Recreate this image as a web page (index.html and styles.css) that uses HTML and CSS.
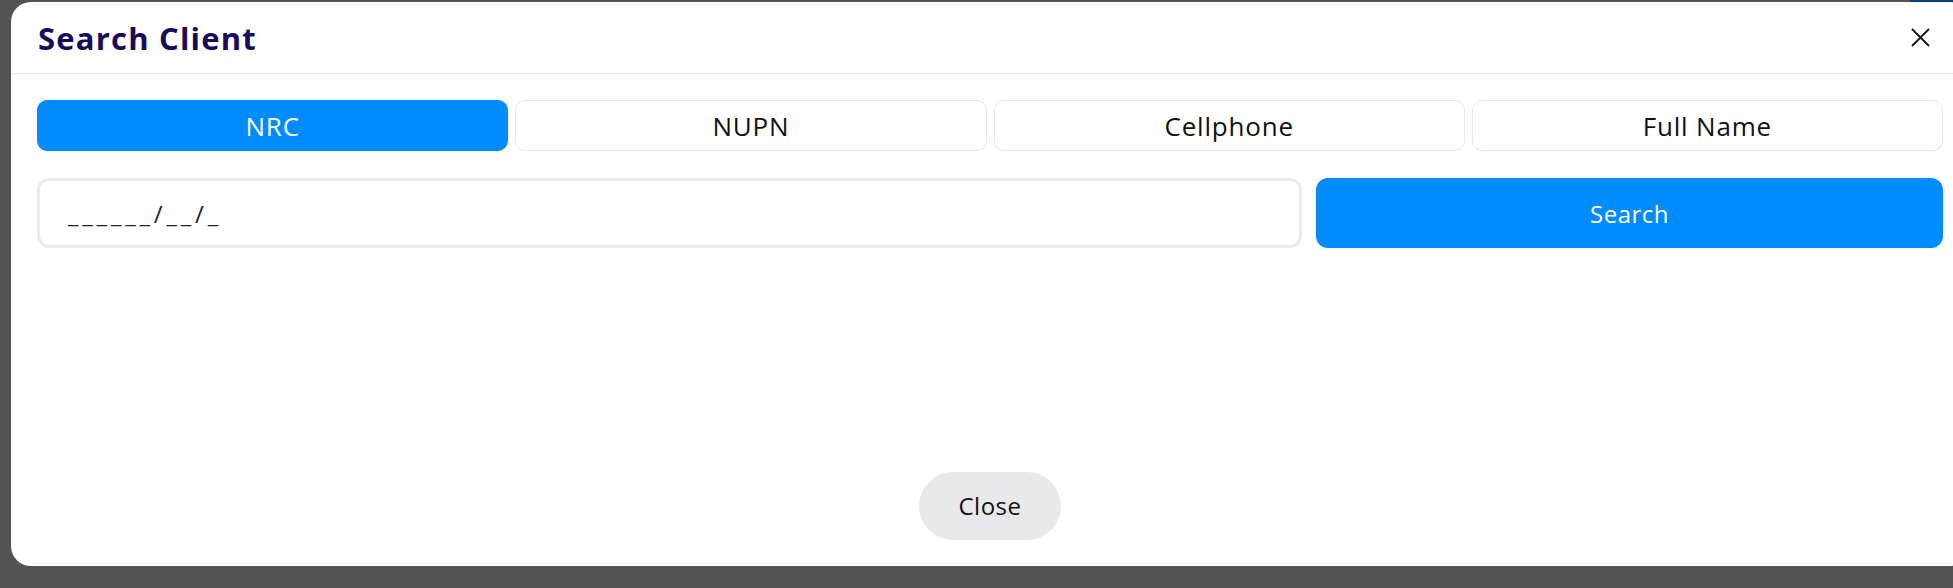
FILE: index.html
```html
<!DOCTYPE html>
<html>
<head>
<meta charset="utf-8">
<link rel="stylesheet" href="styles.css">
</head>
<body>
<div class="topstrip"><span class="topstrip-accent"></span></div>
<div class="modal">
  <div class="modal-header">
    <h2 class="modal-title">Search Client</h2>
    <button class="close-x" aria-label="Close">
      <svg width="19" height="19" viewBox="0 0 19 19"><path d="M1 1 L18 18 M18 1 L1 18" stroke="#111" stroke-width="1.8" fill="none"/></svg>
    </button>
  </div>
  <div class="modal-body">
    <div class="tabs">
      <button class="tab active">NRC</button>
      <button class="tab">NUPN</button>
      <button class="tab">Cellphone</button>
      <button class="tab">Full Name</button>
    </div>
    <div class="search-row">
      <input class="search-input" type="text" value="______/__/_">
      <button class="search-btn">Search</button>
    </div>
    <div class="modal-footer">
      <button class="close-btn">Close</button>
    </div>
  </div>
</div>
</body>
</html>
```

FILE: styles.css
```css
html, body {
  margin: 0;
  padding: 0;
}
body {
  background: #535353;
  overflow: hidden;
  font-family: "Open Sans", "Liberation Sans", sans-serif;
  width: 1953px;
  height: 588px;
  position: relative;
}
.topstrip {
  position: absolute;
  top: 0;
  left: 0;
  right: 0;
  height: 2px;
}
.topstrip-accent {
  position: absolute;
  right: 0;
  top: 0;
  width: 43px;
  height: 2px;
  background: #0d3f73;
}
.modal {
  margin: 2px 0 0 11px;
  width: 1959px;
  height: 564px;
  background: #fff;
  border-radius: 20px;
  display: flex;
  flex-direction: column;
  box-sizing: border-box;
}
.modal-header {
  height: 72px;
  box-sizing: border-box;
  border-bottom: 1px solid #e6e6e6;
  display: flex;
  align-items: center;
  justify-content: space-between;
  padding: 0 40px 0 27px;
}
.modal-title {
  margin: 0;
  font-size: 31px;
  font-weight: 700;
  color: #1a0a5c;
  letter-spacing: 1.2px;
}
.close-x {
  background: none;
  border: 0;
  padding: 0;
  width: 19px;
  height: 19px;
  display: flex;
  cursor: pointer;
}
.modal-body {
  flex: 1;
  display: flex;
  flex-direction: column;
  padding: 26px 27px 26px 26px;
}
.tabs {
  display: grid;
  grid-template-columns: repeat(4, 1fr);
  gap: 7px;
  width: 1906px;
}
.tab {
  height: 51px;
  border: 1px solid #e8e8e8;
  border-radius: 10px;
  background: #fff;
  color: #111;
  font-family: inherit;
  font-size: 26px;
  letter-spacing: 0.8px;
  padding: 0;
}
.tab.active {
  background: #008cff;
  border-color: #008cff;
  color: #fff;
}
.search-row {
  display: grid;
  grid-template-columns: minmax(0, 1265fr) minmax(0, 627fr);
  gap: 14px;
  width: 1906px;
  margin-top: 27px;
}
.search-input {
  height: 70px;
  box-sizing: border-box;
  border: 3px solid #ebebeb;
  border-radius: 12px;
  padding: 0 0 0 28px;
  font-family: inherit;
  font-size: 24px;
  color: #222;
  outline: none;
  letter-spacing: 3.8px;
}
.search-btn {
  height: 70px;
  border: 0;
  border-radius: 12px;
  background: #008cff;
  color: #fff;
  font-family: inherit;
  font-size: 24px;
  font-weight: 500;
  letter-spacing: 0.5px;
}
.modal-footer {
  margin-top: auto;
  display: flex;
  justify-content: center;
  width: 1906px;
}
.close-btn {
  width: 142px;
  height: 68px;
  border: 0;
  border-radius: 34px;
  background: #e9e9ec;
  color: #111;
  font-family: inherit;
  font-size: 24px;
  letter-spacing: 0.5px;
  padding-bottom: 2px;
}
```
